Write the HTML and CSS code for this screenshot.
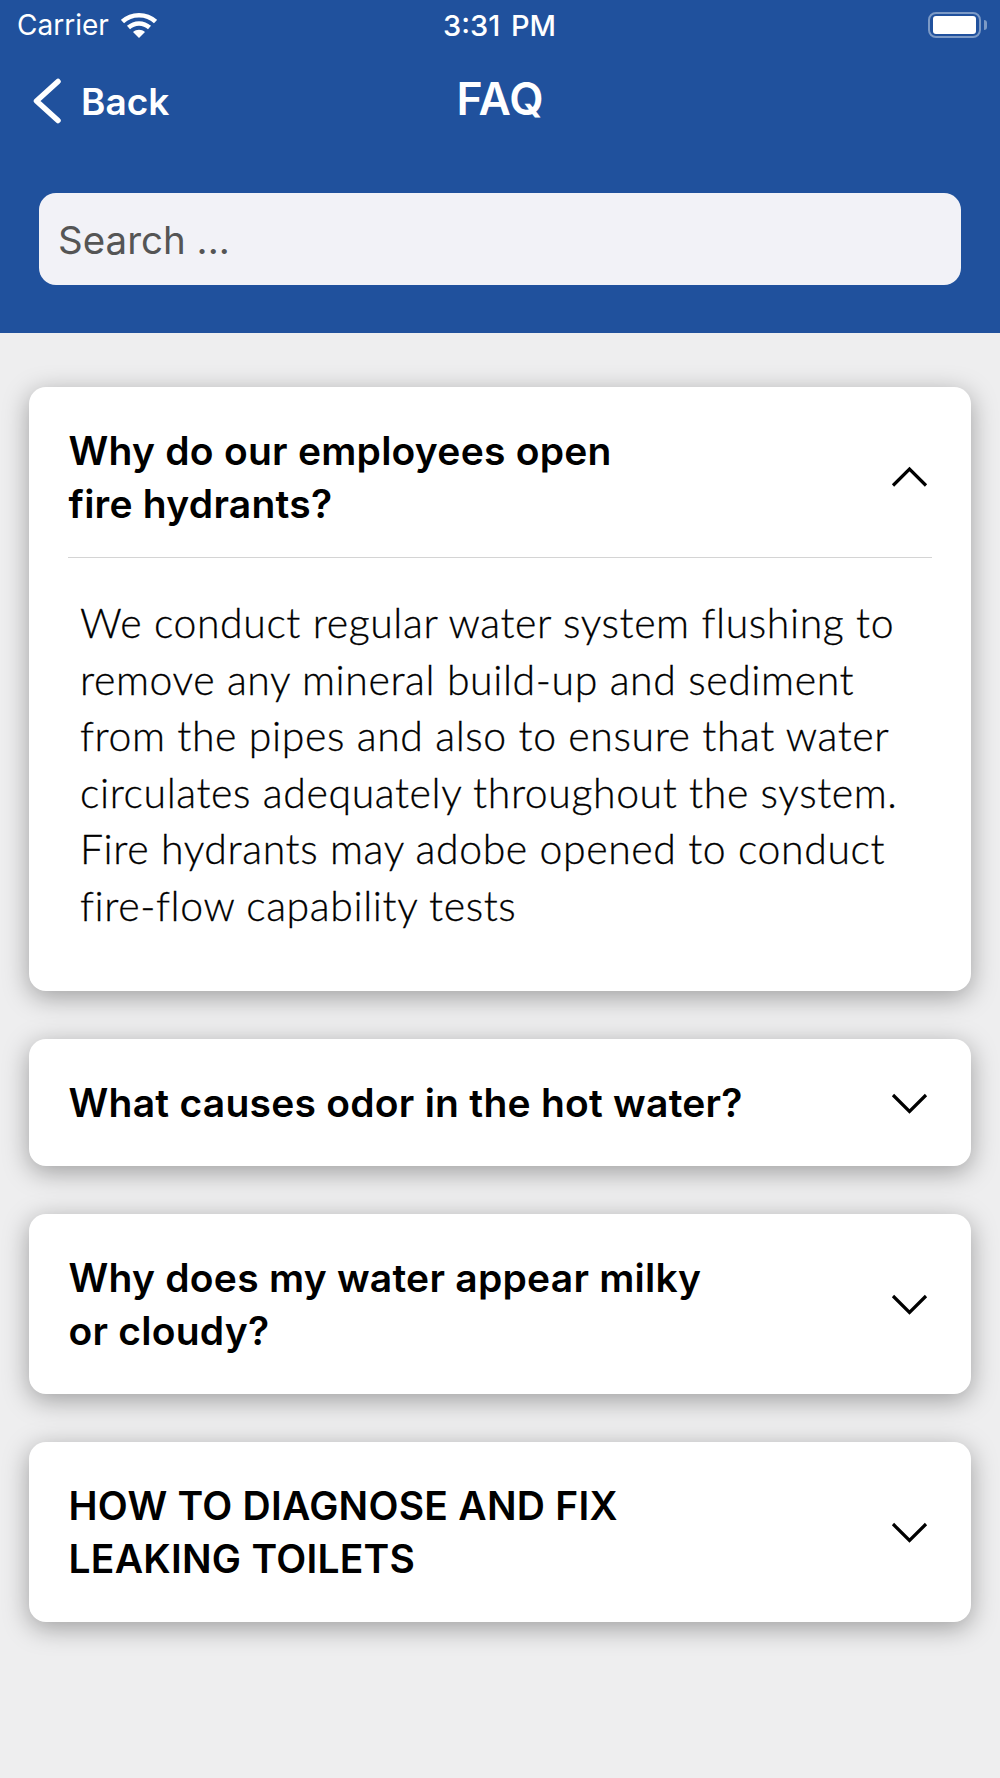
FILE: index.html
```html
<!DOCTYPE html>
<html lang="en">
<head>
    <meta charset="UTF-8">
    <meta name="viewport" content="width=device-width, initial-scale=1.0">
    <title>FAQ</title>
    <link rel="stylesheet" href="styles.css">
</head>
<body>
    <header class="top">
        <div class="status">
            <div class="status-left">
                <span>Carrier</span>
                <svg class="wifi" width="36" height="26" viewBox="0 0 36 26">
                    <path d="M1.500 9.500C10.500 1 25.500 1 34.500 9.500" fill="none" stroke="#fff" stroke-width="4.500"/>
                    <path d="M7.500 15.500C13.500 10 22.500 10 28.500 15.500" fill="none" stroke="#fff" stroke-width="4.500"/>
                    <path d="M12 20C15.500 17 20.500 17 24 20L18 26Z" fill="#fff"/>
                </svg>
            </div>
            <span class="clock">3:31 PM</span>
            <div class="battery"><div class="battery-fill"></div></div>
        </div>

        <nav class="nav">
            <a class="back">
                <svg width="30" height="46" viewBox="0 0 30 46">
                    <path d="M26 3.500L4.500 23L26 42.500" fill="none" stroke="#fff" stroke-width="5.500" stroke-linecap="round" stroke-linejoin="round"/>
                </svg>
                <span>Back</span>
            </a>
            <h1>FAQ</h1>
        </nav>

        <div class="search">Search ...</div>
    </header>

    <main class="list">
        <section class="card">
            <div class="question open">
                <h2>Why do our employees open<br>fire hydrants?</h2>
                <svg class="chevron" width="38" height="22" viewBox="0 0 38 22">
                    <path d="M3 19.500L19.500 3L36 19.500" fill="none" stroke="#000" stroke-width="3.200"/>
                </svg>
            </div>
            <p class="answer">We conduct regular water system flushing to<br>remove any mineral build-up and sediment<br>from the pipes and also to ensure that water<br>circulates adequately throughout the system.<br>Fire hydrants may adobe opened to conduct<br>fire-flow capability tests</p>
        </section>

        <section class="card">
            <div class="question">
                <h2>What causes odor in the hot water?</h2>
                <svg class="chevron" width="38" height="22" viewBox="0 0 38 22">
                    <path d="M3 3L19.500 19.500L36 3" fill="none" stroke="#000" stroke-width="3.200"/>
                </svg>
            </div>
        </section>

        <section class="card">
            <div class="question">
                <h2>Why does my water appear milky<br>or cloudy?</h2>
                <svg class="chevron" width="38" height="22" viewBox="0 0 38 22">
                    <path d="M3 3L19.500 19.500L36 3" fill="none" stroke="#000" stroke-width="3.200"/>
                </svg>
            </div>
        </section>

        <section class="card">
            <div class="question">
                <h2>HOW TO DIAGNOSE AND FIX<br>LEAKING TOILETS</h2>
                <svg class="chevron" width="38" height="22" viewBox="0 0 38 22">
                    <path d="M3 3L19.500 19.500L36 3" fill="none" stroke="#000" stroke-width="3.200"/>
                </svg>
            </div>
        </section>
    </main>
</body>
</html>
```

FILE: styles.css
```css
/* Page */
body {
    margin: 0;
    height: 1778px;
    background-color: #eeeeef;
    font-family: 'Inter', sans-serif;
    color: #000;
    overflow: hidden;
}

/* Blue header */
.top {
    height: 333px;
    box-sizing: border-box;
    background-color: #20519d;
    color: #fff;
}

.status {
    height: 50px;
    padding: 0 13px 0 17px;
    display: grid;
    grid-template-columns: 1fr auto 1fr;
    align-items: center;
    font-size: 28px;
}

.status-left {
    display: flex;
    align-items: center;
    gap: 12px;
}

.clock {
    margin-right: 5px;
    font-size: 29px;
    font-weight: 500;
    word-spacing: 3px;
}

.battery {
    justify-self: end;
    width: 53px;
    height: 26px;
    margin-right: 6px;
    box-sizing: border-box;
    padding: 2px 3px;
    border: 2px solid #7c9ac6;
    border-radius: 8px;
    position: relative;
}

.battery::after {
    content: '';
    position: absolute;
    right: -8px;
    top: 6px;
    width: 3px;
    height: 10px;
    border-radius: 0 3px 3px 0;
    background-color: #7c9ac6;
}

.battery-fill {
    height: 100%;
    background-color: #fff;
    border-radius: 3px;
}

.nav {
    height: 100px;
    margin-top: 1px;
    padding-left: 32px;
    display: flex;
    align-items: center;
    position: relative;
}

.back {
    display: flex;
    align-items: center;
    gap: 19px;
    font-size: 37px;
    font-weight: 600;
}

.nav h1 {
    position: absolute;
    left: 0;
    right: 0;
    top: 23px;
    margin: 0;
    text-align: center;
    font-size: 44.500px;
    font-weight: 600;
    line-height: 50px;
}

.search {
    margin: 42px 39px 0;
    height: 92px;
    padding: 2px 0 0 19px;
    box-sizing: border-box;
    display: flex;
    align-items: center;
    border-radius: 17px;
    background-color: #f2f2f7;
    color: #555;
    font-size: 38.500px;
}

/* Cards */
.list {
    padding: 54px 29px 0;
    display: flex;
    flex-direction: column;
    gap: 48px;
}

.card {
    background-color: #fff;
    border-radius: 17px;
    box-shadow: 0 6px 26px rgba(0, 0, 0, 0.34);
}

.question {
    margin: 0 38px 0 39.500px;
    padding: 37px 5px 37px 0;
    display: flex;
    align-items: center;
    justify-content: space-between;
}

.question.open {
    padding-bottom: 27px;
}

.question h2 {
    margin: 0;
    font-size: 39px;
    line-height: 53px;
    font-weight: 600;
    letter-spacing: 0.25px;
}

.answer {
    margin: 0 39px 0 39px;
    padding: 37px 0 57px 12px;
    border-top: 1px solid #d4d4d4;
    font-family: 'Lato', sans-serif;
    font-weight: 300;
    font-size: 41px;
    letter-spacing: 0.600px;
    line-height: 56.500px;
    -webkit-text-stroke: 0.3px #000;
}

.chevron {
    flex: none;
}
```
